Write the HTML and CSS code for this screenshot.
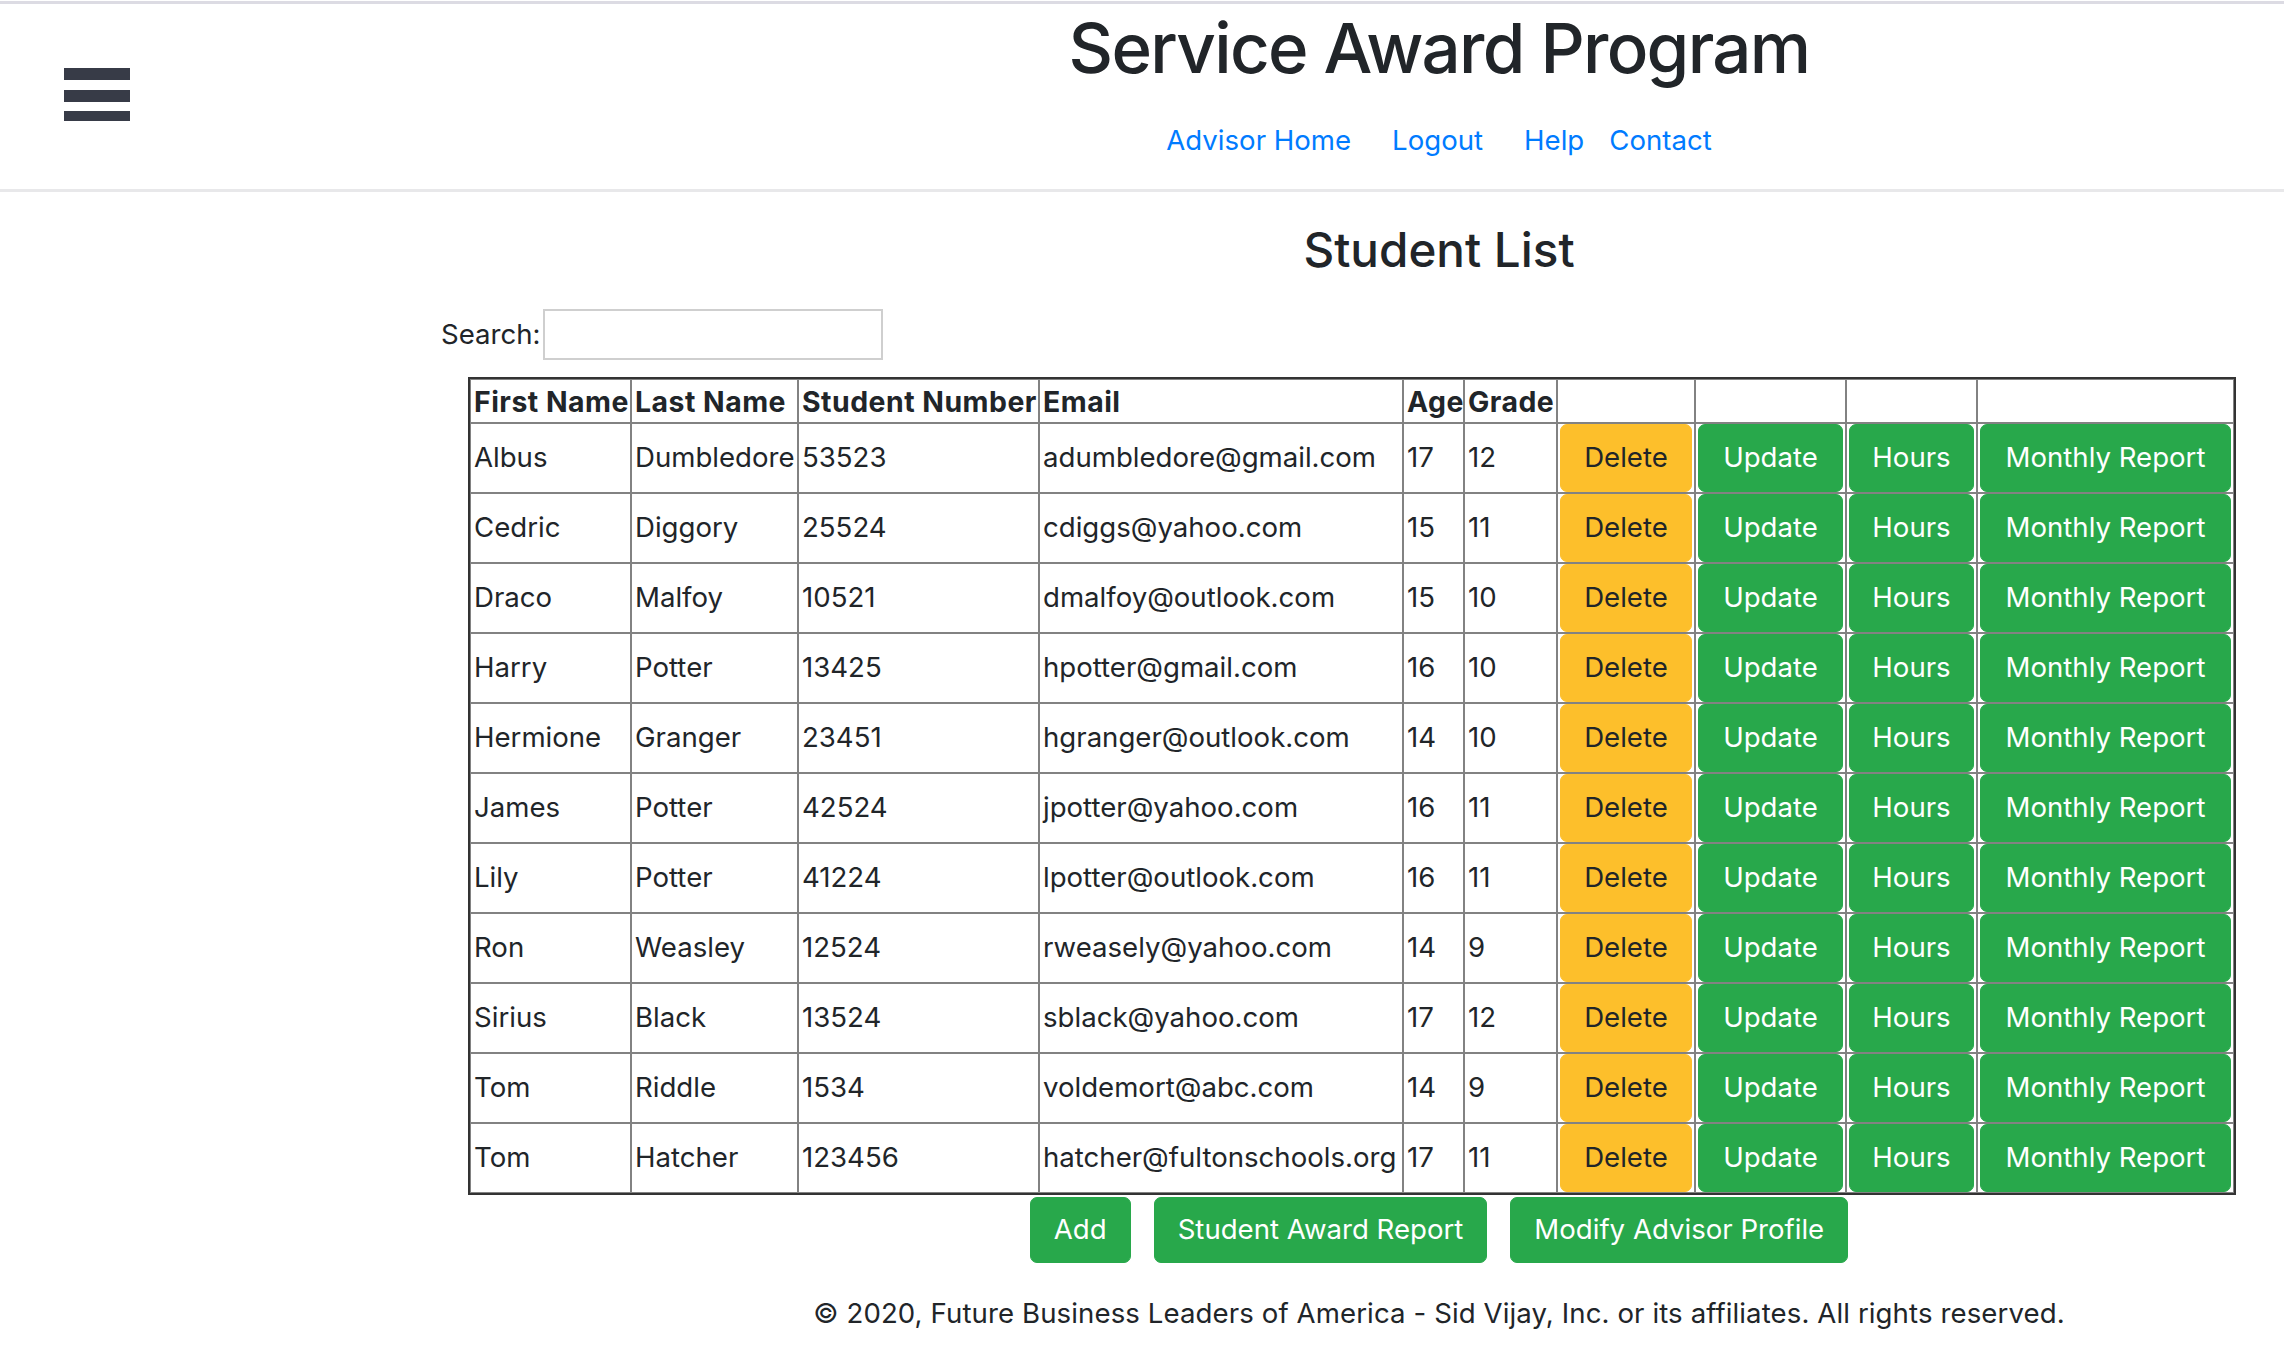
FILE: index.html
```html
<!DOCTYPE html>
<html lang="en">
<head>
<meta charset="utf-8">
<title>Student List</title>
<link rel="stylesheet" href="styles.css">
</head>
<body>
<header class="site-header">
  <div class="menu-col">
    <svg class="hamburger" width="66" height="53" viewBox="0 0 66 53" aria-hidden="true">
      <rect x="0" y="0" width="66" height="12" fill="#373b47"/>
      <rect x="0" y="22" width="66" height="12" fill="#373b47"/>
      <rect x="0" y="43" width="66" height="10" fill="#373b47"/>
    </svg>
  </div>
  <div class="brand-col">
    <h1 class="site-title">Service Award Program</h1>
    <nav class="nav">
      <a href="#" class="nav-link">Advisor Home</a>
      <a href="#" class="nav-link">Logout</a>
      <a href="#" class="nav-link">Help</a>
      <a href="#" class="nav-link nav-link-tight">Contact</a>
    </nav>
  </div>
</header>

<main class="main">
  <h2 class="page-title">Student List</h2>
  <div class="list-area">
    <div class="search-row">
      <label class="search-label" for="search">Search:</label>
      <input id="search" class="search-input" type="text">
    </div>
    <table class="students">
      <colgroup>
        <col class="c-first"><col class="c-last"><col class="c-num"><col class="c-email"><col class="c-age"><col class="c-grade"><col class="c-del"><col class="c-upd"><col class="c-hrs"><col class="c-rep">
      </colgroup>
      <thead>
        <tr><th>First Name</th><th>Last Name</th><th>Student Number</th><th>Email</th><th>Age</th><th>Grade</th><th></th><th></th><th></th><th></th></tr>
      </thead>
      <tbody>
        <tr><td>Albus</td><td>Dumbledore</td><td>53523</td><td>adumbledore@gmail.com</td><td>17</td><td>12</td><td class="bc"><button class="btn btn-warning">Delete</button></td><td class="bc"><button class="btn btn-success">Update</button></td><td class="bc"><button class="btn btn-success">Hours</button></td><td class="bc"><button class="btn btn-success">Monthly Report</button></td></tr>
        <tr><td>Cedric</td><td>Diggory</td><td>25524</td><td>cdiggs@yahoo.com</td><td>15</td><td>11</td><td class="bc"><button class="btn btn-warning">Delete</button></td><td class="bc"><button class="btn btn-success">Update</button></td><td class="bc"><button class="btn btn-success">Hours</button></td><td class="bc"><button class="btn btn-success">Monthly Report</button></td></tr>
        <tr><td>Draco</td><td>Malfoy</td><td>10521</td><td>dmalfoy@outlook.com</td><td>15</td><td>10</td><td class="bc"><button class="btn btn-warning">Delete</button></td><td class="bc"><button class="btn btn-success">Update</button></td><td class="bc"><button class="btn btn-success">Hours</button></td><td class="bc"><button class="btn btn-success">Monthly Report</button></td></tr>
        <tr><td>Harry</td><td>Potter</td><td>13425</td><td>hpotter@gmail.com</td><td>16</td><td>10</td><td class="bc"><button class="btn btn-warning">Delete</button></td><td class="bc"><button class="btn btn-success">Update</button></td><td class="bc"><button class="btn btn-success">Hours</button></td><td class="bc"><button class="btn btn-success">Monthly Report</button></td></tr>
        <tr><td>Hermione</td><td>Granger</td><td>23451</td><td>hgranger@outlook.com</td><td>14</td><td>10</td><td class="bc"><button class="btn btn-warning">Delete</button></td><td class="bc"><button class="btn btn-success">Update</button></td><td class="bc"><button class="btn btn-success">Hours</button></td><td class="bc"><button class="btn btn-success">Monthly Report</button></td></tr>
        <tr><td>James</td><td>Potter</td><td>42524</td><td>jpotter@yahoo.com</td><td>16</td><td>11</td><td class="bc"><button class="btn btn-warning">Delete</button></td><td class="bc"><button class="btn btn-success">Update</button></td><td class="bc"><button class="btn btn-success">Hours</button></td><td class="bc"><button class="btn btn-success">Monthly Report</button></td></tr>
        <tr><td>Lily</td><td>Potter</td><td>41224</td><td>lpotter@outlook.com</td><td>16</td><td>11</td><td class="bc"><button class="btn btn-warning">Delete</button></td><td class="bc"><button class="btn btn-success">Update</button></td><td class="bc"><button class="btn btn-success">Hours</button></td><td class="bc"><button class="btn btn-success">Monthly Report</button></td></tr>
        <tr><td>Ron</td><td>Weasley</td><td>12524</td><td>rweasely@yahoo.com</td><td>14</td><td>9</td><td class="bc"><button class="btn btn-warning">Delete</button></td><td class="bc"><button class="btn btn-success">Update</button></td><td class="bc"><button class="btn btn-success">Hours</button></td><td class="bc"><button class="btn btn-success">Monthly Report</button></td></tr>
        <tr><td>Sirius</td><td>Black</td><td>13524</td><td>sblack@yahoo.com</td><td>17</td><td>12</td><td class="bc"><button class="btn btn-warning">Delete</button></td><td class="bc"><button class="btn btn-success">Update</button></td><td class="bc"><button class="btn btn-success">Hours</button></td><td class="bc"><button class="btn btn-success">Monthly Report</button></td></tr>
        <tr><td>Tom</td><td>Riddle</td><td>1534</td><td>voldemort@abc.com</td><td>14</td><td>9</td><td class="bc"><button class="btn btn-warning">Delete</button></td><td class="bc"><button class="btn btn-success">Update</button></td><td class="bc"><button class="btn btn-success">Hours</button></td><td class="bc"><button class="btn btn-success">Monthly Report</button></td></tr>
        <tr><td>Tom</td><td>Hatcher</td><td>123456</td><td>hatcher@fultonschools.org</td><td>17</td><td>11</td><td class="bc"><button class="btn btn-warning">Delete</button></td><td class="bc"><button class="btn btn-success">Update</button></td><td class="bc"><button class="btn btn-success">Hours</button></td><td class="bc"><button class="btn btn-success">Monthly Report</button></td></tr>
      </tbody>
    </table>
  </div>
  <div class="actions">
    <button class="btn btn-success btn-lg">Add</button>
    <button class="btn btn-success btn-lg">Student Award Report</button>
    <button class="btn btn-success btn-lg">Modify Advisor Profile</button>
  </div>
  <footer class="footer">© 2020, Future Business Leaders of America - Sid Vijay, Inc. or its affiliates. All rights reserved.</footer>
</main>
</body>
</html>
```
FILE: styles.css
```css
* { box-sizing: border-box; }

html, body {
  margin: 0;
  padding: 0;
  background: #ffffff;
}

body {
  font-family: "Inter", "Liberation Sans", sans-serif;
  font-size: 27.6px;
  color: #212529;
}

.site-header {
  display: grid;
  grid-template-columns: 594px 1fr;
  border-top: 3px solid #dcdbe3;
  margin-top: 1px;
  border-bottom: 3px solid #e8e8ea;
  height: 191px;
}

.menu-col {
  padding: 64px 0 0 64px;
}

.hamburger { display: block; }

.brand-col {
  display: flex;
  flex-direction: column;
  align-items: center;
}

.site-title {
  margin: 10px 0 0 0;
  font-size: 69px;
  line-height: 1;
  font-weight: 500;
  letter-spacing: -1.7px;
}

.nav {
  display: flex;
  gap: 41px;
  margin-top: 44px;
  line-height: 1;
}

.nav-link {
  color: #007bff;
  text-decoration: none;
}

.nav-link-tight { margin-left: -16px; }

.main {
  display: flex;
  flex-direction: column;
}

.page-title {
  margin: 34px 0 0 594px;
  text-align: center;
  font-size: 47.6px;
  line-height: 1;
  font-weight: 500;
}

.list-area {
  padding-left: 441px;
  margin-top: 35px;
}

.search-row {
  display: flex;
  align-items: center;
  height: 51px;
}

.search-label { line-height: 1; margin-top: 2px; }

.search-input {
  width: 340px;
  height: 51px;
  margin-left: 2px;
  border: 2px solid #cfcfcf;
  background: #fff;
  font: inherit;
}

.students {
  margin: 17px 0 0 27px;
  width: 1768px;
  table-layout: fixed;
  border: 2px solid #333;
  border-spacing: 0;
}

.c-first { width: 161px; }
.c-last { width: 167px; }
.c-num { width: 241px; }
.c-email { width: 364px; }
.c-age { width: 61px; }
.c-grade { width: 93px; }
.c-del { width: 138px; }
.c-upd { width: 151px; }
.c-hrs { width: 131px; }
.c-rep { width: 257px; }

.students th,
.students td {
  border: 1px solid #828282;
  padding: 0 3px;
  text-align: left;
  white-space: nowrap;
}

.students th {
  height: 44px;
  font-size: 28.4px;
  font-weight: 700;
  letter-spacing: 0.5px;
  line-height: 1;
  padding-top: 4px;
}

.students td {
  height: 70px;
  line-height: 1;
}

.students td.bc { padding: 0 2px; }

.btn {
  font: inherit;
  border: 1px solid transparent;
  border-radius: 7px;
  color: #fff;
  cursor: pointer;
  line-height: 1;
}

.students .btn {
  display: block;
  width: 100%;
  height: 68px;
  padding: 0;
}

.btn-warning {
  background: #fdbf2b;
  border-color: #fdbf2b;
  color: #212529;
}

.btn-success {
  background: #28a84b;
  border-color: #28a84b;
}

.actions {
  display: flex;
  justify-content: center;
  gap: 23px;
  margin: 2px 0 0 594px;
}

.btn-lg {
  height: 66px;
  padding: 0 23px;
}

.footer {
  margin: 30px 0 0 594px;
  text-align: center;
  line-height: 41px;
  letter-spacing: 0.1px;
}
```
